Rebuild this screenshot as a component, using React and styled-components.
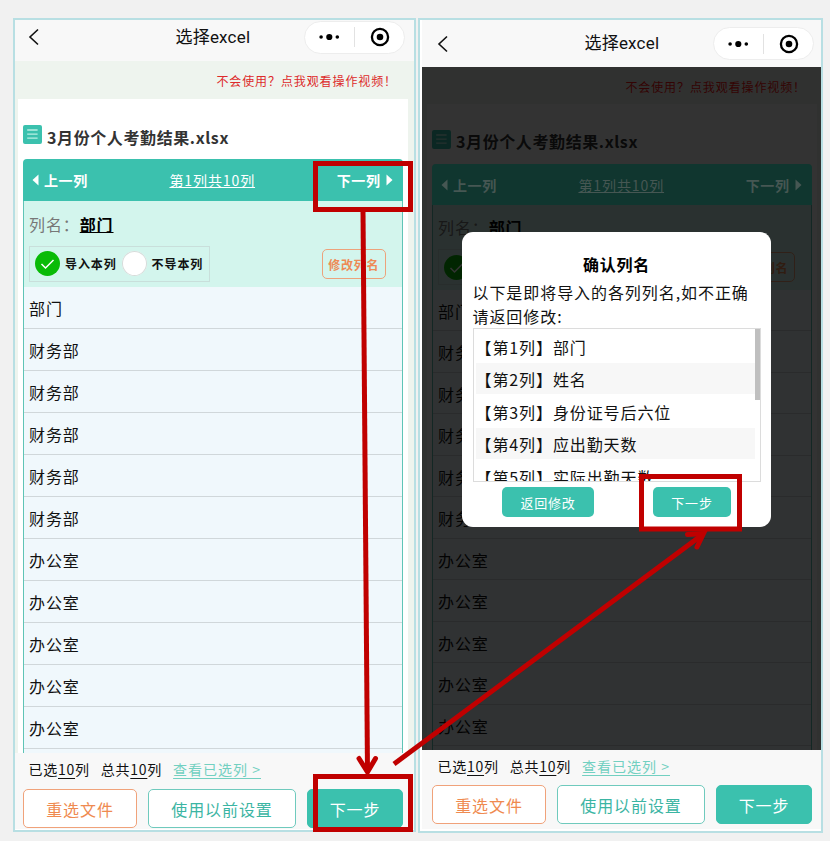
import React from "react";
import styled, { createGlobalStyle } from "styled-components";

const rows = [
  "部门",
  "财务部",
  "财务部",
  "财务部",
  "财务部",
  "财务部",
  "办公室",
  "办公室",
  "办公室",
  "办公室",
  "办公室",
  "",
];

const columns = ["部门", "姓名", "身份证号后六位", "应出勤天数", "实际出勤天数"];

const NavBar = ({ tall }) => (
  <Nav $tall={tall}>
    <BackIcon viewBox="0 0 12 18">
      <path d="M10 1.5 L2 9 L10 16.5" />
    </BackIcon>
    <NavTitle>选择excel</NavTitle>
    <Capsule>
      <svg width="22" height="10" viewBox="0 0 22 10">
        <circle cx="2.1" cy="5" r="1.8" />
        <circle cx="10.3" cy="5" r="3.1" />
        <circle cx="18.3" cy="5" r="1.8" />
      </svg>
      <CapsuleLine />
      <svg width="20" height="20" viewBox="0 0 20 20">
        <circle cx="10" cy="10" r="8.1" fill="none" stroke="#000" strokeWidth="2.3" />
        <circle cx="10" cy="10" r="3.3" />
      </svg>
    </Capsule>
  </Nav>
);

const Arrow = ({ right }) => (
  <svg width="7" height="12" viewBox="0 0 7 12">
    <path
      d={right ? "M0.5 0.5 L6.5 6 L0.5 11.5 Z" : "M6.5 0.5 L0.5 6 L6.5 11.5 Z"}
      fill="currentColor"
    />
  </svg>
);

const Content = ({ dim }) => (
  <>
    <Banner $dim={dim}>不会使用？点我观看操作视频！</Banner>
    <Sheet $dim={dim}>
      <FileName $dim={dim}>
        <svg width="19" height="19" viewBox="0 0 19 19">
          <rect width="19" height="19" rx="2" fill="#3bc1ae" />
          <path d="M4.2 5 H14.6 M4.2 9.1 H14.6 M4.2 13.2 H14.6" stroke="#b9f0e4" strokeWidth="1.3" />
        </svg>
        <h2>3月份个人考勤结果.xlsx</h2>
      </FileName>
      <TableHead $dim={dim}>
        <Step>
          <Arrow />
          上一列
        </Step>
        <Count>第1列共10列</Count>
        <Step>
          下一列
          <Arrow right />
        </Step>
      </TableHead>
      <Setting $dim={dim}>
        <ColumnName $dim={dim}>
          列名：<b>部门</b>
        </ColumnName>
        <Options>
          <RadioBox>
            <Radio $on>
              <svg width="25" height="25" viewBox="0 0 25 25">
                <path d="M6.5 13 L10.5 17 L18.5 9" fill="none" stroke="#fff" strokeWidth="1.5" />
              </svg>
            </Radio>
            <span>导入本列</span>
            <Radio />
            <span>不导本列</span>
          </RadioBox>
          <RenameBtn>修改列名</RenameBtn>
        </Options>
      </Setting>
      <List>
        {rows.map((row, idx) => (
          <Row key={idx} $dim={dim}>
            {row}
          </Row>
        ))}
      </List>
    </Sheet>
  </>
);

const BottomBar = ({ dim }) => (
  <Bottom $dim={dim}>
    <Summary $dim={dim}>
      <span>
        已选<u>10</u>列
      </span>
      <span>
        总共<u>10</u>列
      </span>
      <Link>查看已选列 &gt;</Link>
    </Summary>
    <Buttons>
      <Btn $width={114} $color="#ef8a50" $line="#f0a27a">
        重选文件
      </Btn>
      <Btn $width={148} $color="#3bb5a3" $line="#6fcabd">
        使用以前设置
      </Btn>
      <Btn $width={96} $color="#fff" $line="#3bc1ae" $fill="#3bc1ae">
        下一步
      </Btn>
    </Buttons>
  </Bottom>
);

const ConfirmModal = () => (
  <Modal>
    <h3>确认列名</h3>
    <p>以下是即将导入的各列列名,如不正确请返回修改:</p>
    <ModalList>
      <ul>
        {columns.map((name, idx) => (
          <li key={name}>{`【第${idx + 1}列】${name}`}</li>
        ))}
      </ul>
      <ScrollThumb />
    </ModalList>
    <ModalButtons>
      <ModalBtn $width={92}>返回修改</ModalBtn>
      <ModalBtn $width={78}>下一步</ModalBtn>
    </ModalButtons>
  </Modal>
);

const App = () => {
  return (
    <Board>
      <GlobalStyle />
      <Phone>
        <NavBar />
        <Body>
          <Content />
        </Body>
        <BottomBar />
      </Phone>
      <Phone $dim>
        <NavBar tall />
        <Body $dim>
          <Content dim />
          <Mask />
          <ConfirmModal />
        </Body>
        <BottomBar dim />
      </Phone>
      <Marks viewBox="0 0 830 841">
        <rect x="315.5" y="163.5" width="95" height="46" />
        <rect x="315.5" y="776.5" width="95" height="53" />
        <rect x="641.5" y="476.5" width="98" height="52.5" />
        <path d="M363 211 L367.5 771" />
        <path d="M359 758.5 L367.5 772 L375.5 758.5" strokeLinecap="round" />
        <path d="M394 764 L702 535" />
        <path d="M687.5 534.5 L703.5 533.5 L697 547" strokeLinecap="round" />
      </Marks>
    </Board>
  );
};

const GlobalStyle = createGlobalStyle`
  * {
    box-sizing: border-box;
    margin: 0;
    padding: 0;
  }
  body {
    background-color: #f1f1f1;
    font-family: "Noto Sans CJK SC", sans-serif;
    overflow: hidden;
  }
  ul {
    list-style: none;
  }
  svg {
    flex-shrink: 0;
  }
`;
const Board = styled.div`
  position: relative;
  display: flex;
  align-items: flex-start;
  gap: 2px;
  padding: 18px 7px 0 13px;
  width: 830px;
  height: 841px;
`;
const Phone = styled.div`
  display: flex;
  flex-direction: column;
  width: ${(props) => (props.$dim ? 405 : 403)}px;
  height: ${(props) => (props.$dim ? 815 : 814)}px;
  padding: ${(props) => (props.$dim ? "0 0 2px 2px" : "0 0 1.5px")};
  border: 2px solid #b8dfe3;
  background-color: #fff;
`;
const Nav = styled.div`
  display: flex;
  align-items: center;
  flex-shrink: 0;
  height: ${(props) => (props.$tall ? 47 : 41)}px;
  padding: ${(props) => (props.$tall ? "0 7.5px 0 15px" : "0 9.5px 7px 13px")};
  background-color: #f8f8f8;
`;
const BackIcon = styled.svg`
  width: 12px;
  height: 18px;
  fill: none;
  stroke: #111;
  stroke-width: 1.6;
`;
const NavTitle = styled.div`
  flex: 1;
  padding-left: 135.5px;
  font-family: Roboto, "Noto Sans CJK SC", sans-serif;
  font-size: 17px;
  letter-spacing: 0.2px;
  line-height: 25px;
  color: #111;
`;
const Capsule = styled.div`
  display: flex;
  align-items: center;
  width: 101px;
  height: 33px;
  padding: 0 14px;
  justify-content: space-between;
  border: 1px solid #ededed;
  border-radius: 17px;
  background-color: #fff;
`;
const CapsuleLine = styled.div`
  width: 1px;
  height: 20px;
  margin-right: 2px;
  background-color: #e2e2e2;
`;
const Body = styled.div`
  position: relative;
  flex-shrink: 0;
  height: ${(props) => (props.$dim ? 682.5 : 691.5)}px;
  overflow: hidden;
  background-color: #eef4ee;
`;
const Banner = styled.div`
  height: ${(props) => (props.$dim ? 37 : 38)}px;
  padding-right: ${(props) => (props.$dim ? 15 : 17)}px;
  text-align: right;
  font-size: 12px;
  letter-spacing: 0.9px;
  line-height: ${(props) => (props.$dim ? 39 : 40)}px;
  color: ${(props) => (props.$dim ? "#ff1414" : "#dd2b2b")};
`;
const Sheet = styled.div`
  width: 390px;
  margin-left: ${(props) => (props.$dim ? 5 : 3)}px;
  padding: 0 5px;
  background-color: #fff;
`;
const FileName = styled.div`
  display: flex;
  height: 60px;
  padding-top: 26px;

  & h2 {
    margin: ${(props) => (props.$dim ? "-1px" : 0)} 0 0 5px;
    font-size: 16px;
    font-weight: 700;
    letter-spacing: 0.6px;
    line-height: 25px;
    color: #333;
  }
`;
const TableHead = styled.div`
  position: relative;
  z-index: ${(props) => (props.$dim ? 1 : 0)};
  display: flex;
  justify-content: space-between;
  align-items: center;
  height: ${(props) => (props.$dim ? 41 : 42)}px;
  padding: 0 10.5px 0 9px;
  border-radius: 4px 4px 0 0;
  background-color: ${(props) => (props.$dim ? "#10362f" : "#3bc1ae")};
  color: ${(props) => (props.$dim ? "#465753" : "#fff")};
`;
const Step = styled.div`
  display: flex;
  align-items: center;
  gap: 5px;
  font-size: 14px;
  font-weight: 700;
  letter-spacing: 0.6px;
`;
const Count = styled.div`
  font-size: 14px;
  letter-spacing: 0.9px;
  text-decoration: underline;
`;
const Setting = styled.div`
  height: ${(props) => (props.$dim ? 84.5 : 86)}px;
  padding: ${(props) => (props.$dim ? 9 : 9.5)}px 16px 0 5px;
  border: solid #5fc4b6;
  border-width: 0 1px;
  background-color: #d3f5ed;
`;
const ColumnName = styled.div`
  height: 28px;
  font-size: 16px;
  letter-spacing: 0.9px;
  line-height: ${(props) => (props.$dim ? 27 : 26)}px;
  color: #777;

  & b {
    color: #000;
    text-decoration: underline;
  }
`;
const Options = styled.div`
  display: flex;
  justify-content: space-between;
  align-items: center;
  margin-top: 7px;
`;
const RadioBox = styled.div`
  display: flex;
  align-items: center;
  width: 181px;
  height: 36px;
  padding-left: 5px;
  border: 1px solid #c9dfdb;
  font-size: 12px;
  font-weight: 700;
  letter-spacing: 0.9px;
  color: #111;

  & span {
    margin: 0 5px;
  }
`;
const Radio = styled.div`
  width: 25px;
  height: 25px;
  border-radius: 50%;
  background-color: ${(props) => (props.$on ? "#09bb07" : "#fff")};
  box-shadow: ${(props) => (props.$on ? "none" : "inset 0 0 0 1px #d5dcda")};
`;
const RenameBtn = styled.div`
  width: 64.5px;
  height: 30px;
  border: 1px solid #eda27b;
  border-radius: 5px;
  text-align: center;
  font-size: 12px;
  font-weight: 700;
  letter-spacing: 0.8px;
  line-height: 29px;
  color: #ee8a55;
`;
const List = styled.ul`
  border: solid #5fc4b6;
  border-width: 0 1px;
  background-color: #f0f8fc;
`;
const Row = styled.li`
  height: ${(props) => (props.$dim ? 41.5 : 42)}px;
  padding-left: 5px;
  border-bottom: 1px solid #d0d7da;
  font-size: 16px;
  letter-spacing: 0.9px;
  line-height: 43px;
  color: #111;
`;
const Bottom = styled.div`
  flex: 1;
  padding: ${(props) => (props.$dim ? "4px 9px 0 10px" : "4.5px 11px 0 8px")};
  background-color: #f8f8f8;
`;
const Summary = styled.div`
  display: flex;
  height: ${(props) => (props.$dim ? 31.5 : 32)}px;
  padding-left: 5.5px;
  gap: 11px;
  font-size: 14px;
  letter-spacing: 0.75px;
  line-height: 24px;
  color: #111;

  & u {
    text-underline-offset: 3px;
  }
`;
const Link = styled.span`
  letter-spacing: 1px;
  color: #72d0c1;
  text-decoration: underline;
  text-underline-offset: 3px;
`;
const Buttons = styled.div`
  display: flex;
  justify-content: space-between;
`;
const Btn = styled.div`
  width: ${(props) => props.$width}px;
  height: 39px;
  border: 1px solid ${(props) => props.$line};
  border-radius: 5px;
  background-color: ${(props) => props.$fill || "#fff"};
  text-align: center;
  font-size: 16px;
  letter-spacing: 0.9px;
  line-height: 39px;
  color: ${(props) => props.$color};
`;
const Mask = styled.div`
  position: absolute;
  inset: 0;
  background-color: rgba(0, 0, 0, 0.8);
`;
const Modal = styled.div`
  position: absolute;
  z-index: 2;
  top: 165px;
  left: 40px;
  width: 309px;
  height: 295px;
  padding: 20px 10.5px 0;
  border-radius: 11px;
  background-color: #fff;
  color: #111;

  & h3 {
    text-align: center;
    font-size: 16px;
    letter-spacing: 0.7px;
    line-height: 24px;
    color: #000;
  }
  & p {
    margin-top: 5px;
    height: 47px;
    font-size: 16px;
    letter-spacing: 0.93px;
    line-height: 23.5px;
    word-break: break-all;
  }
`;
const ModalList = styled.div`
  display: flex;
  justify-content: space-between;
  height: 153.5px;
  border: 1px solid #dcdcdc;
  overflow: hidden;

  & ul {
    width: 281px;
    padding: 1.5px 0 0 2px;
  }
  & li {
    height: 30.5px;
    margin-bottom: 2px;
    font-size: 16px;
    letter-spacing: 0.9px;
    line-height: 32px;
    white-space: nowrap;
  }
  & li:nth-child(even) {
    background-color: #f7f7f7;
  }
`;
const ScrollThumb = styled.div`
  width: 5px;
  height: 71px;
  background-color: #bfbfbf;
`;
const ModalButtons = styled.div`
  display: flex;
  justify-content: space-between;
  padding: 5px 29.5px 0;
`;
const ModalBtn = styled.div`
  width: ${(props) => props.$width}px;
  height: 30.5px;
  border-radius: 5px;
  background-color: #3bc1ae;
  text-align: center;
  font-size: 13px;
  letter-spacing: 0.8px;
  line-height: 31px;
  color: #fff;
`;
const Marks = styled.svg`
  position: absolute;
  z-index: 3;
  top: 0;
  left: 0;
  width: 830px;
  height: 841px;
  fill: none;
  stroke: #c00000;
  stroke-width: 5;
  pointer-events: none;
`;

export default App;
